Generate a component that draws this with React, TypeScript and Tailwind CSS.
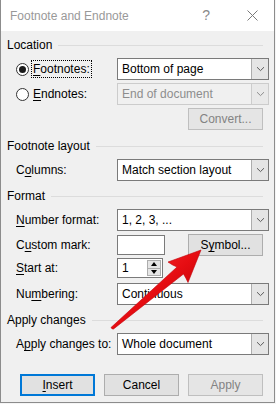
import type { ReactNode } from "react";

function U({ children }: { children: ReactNode }) {
  return <span className="underline underline-offset-[2px] decoration-1">{children}</span>;
}

function Chevron({ color = "#5a5a5a" }: { color?: string }) {
  return (
    <svg width="9" height="6" viewBox="0 0 9 6" fill="none">
      <path d="M1 1.2 L4.5 4.6 L8 1.2" stroke={color} strokeWidth="1" />
    </svg>
  );
}

function Dropdown({ value, disabled }: { value: string; disabled?: boolean }) {
  return (
    <div
      className={`flex h-[22px] w-[152px] shrink-0 border ${
        disabled ? "border-[#cccccc] bg-[#f0f0f0] text-[#8d8d8d]" : "border-[#7a7a7a] bg-white text-black"
      }`}
    >
      <div className="flex flex-1 items-center pl-[4px] leading-none whitespace-nowrap">{value}</div>
      <div
        className={`flex w-[17px] items-center justify-center border-l ${
          disabled ? "border-[#cccccc] bg-[#e9e9e9]" : "border-[#adadad] bg-[#e5e5e5]"
        }`}
      >
        <Chevron color={disabled ? "#8d8d8d" : "#5a5a5a"} />
      </div>
    </div>
  );
}

function Section({ title, className }: { title: string; className: string }) {
  return (
    <div className={`flex h-[14px] items-center ${className}`}>
      <span className="leading-none whitespace-nowrap text-black">{title}</span>
      <div className="ml-[6px] mr-[1px] h-px flex-1 bg-[#dcdcdc]" />
    </div>
  );
}

function Row({ label, children, className = "" }: { label: ReactNode; children: ReactNode; className?: string }) {
  return (
    <div className={`flex h-[22px] items-center ${className}`}>
      <div className="w-[110px] shrink-0 pl-[9px] leading-none whitespace-nowrap text-black">{label}</div>
      {children}
    </div>
  );
}

function Button({
  children,
  disabled,
  primary,
}: {
  children: ReactNode;
  disabled?: boolean;
  primary?: boolean;
}) {
  return (
    <div
      className={`flex h-[22px] w-[75px] items-center justify-center leading-none whitespace-nowrap ${
        primary
          ? "border-2 border-[#0078d7] bg-[#e1e1e1] text-black"
          : disabled
          ? "border border-[#bfbfbf] bg-[#e5e5e5] text-[#838383]"
          : "border border-[#adadad] bg-[#e1e1e1] text-black"
      }`}
    >
      {children}
    </div>
  );
}

function Radio({ checked }: { checked?: boolean }) {
  return (
    <div className="flex h-[13px] w-[13px] shrink-0 items-center justify-center rounded-full border border-[#333333] bg-white">
      {checked && <div className="h-[7px] w-[7px] rounded-full bg-[#1a1a1a]" />}
    </div>
  );
}

function Arrow() {
  return (
    <svg className="pointer-events-none absolute left-0 top-0" width="276" height="404" viewBox="0 0 276 404">
      <defs>
        <linearGradient id="red" x1="0" y1="0" x2="1" y2="1">
          <stop offset="0" stopColor="#ff3b3b" />
          <stop offset="0.5" stopColor="#e60d12" />
          <stop offset="1" stopColor="#a80000" />
        </linearGradient>
      </defs>
      <path
        d="M201 250 L168 262 Q172 265 177 267 L111 327.5 Q112 329.5 113.5 329 L183.5 274 Q186 278 188 282.5 Z"
        fill="url(#red)"
        stroke="#c30008"
        strokeWidth="0.6"
        strokeLinejoin="round"
      />
    </svg>
  );
}

export default function App() {
  return (
    <div className="relative h-[404px] w-[276px] bg-[#f5f5f5] font-['Segoe_UI','Liberation_Sans',sans-serif] text-[12px]">
      <div className="h-[403px] w-[275px] border-b border-l border-r border-[#8c8c8c] bg-[#f0f0f0]">
        {/* title bar */}
        <div className="flex h-[31px] items-center bg-white pl-[9px]">
          <span className="text-[12px] text-[#999999]">Footnote and Endnote</span>
          <span className="ml-auto mr-[37px] text-[14px] text-[#8a8a8a]">?</span>
          <svg className="mr-[16px]" width="11" height="11" viewBox="0 0 11 11">
            <path d="M0.5 0.5 L10.5 10.5 M10.5 0.5 L0.5 10.5" stroke="#7a7a7a" strokeWidth="1" />
          </svg>
        </div>

        <div className="w-[263px] pl-[6px]">
          <Section title="Location" className="mt-[7px]" />

          <div className="mt-[6px] flex h-[22px] items-center pl-[9px]">
            <Radio checked />
            <div className="ml-[2px] w-[86px] shrink-0">
              <span className="inline-flex h-[18px] items-center border border-dotted border-black px-[1px] leading-none">
                <U>F</U>ootnotes:
              </span>
            </div>
            <Dropdown value="Bottom of page" />
          </div>

          <div className="mt-[3px] flex h-[22px] items-center pl-[9px]">
            <Radio />
            <div className="ml-[4px] w-[84px] shrink-0 leading-none">
              <U>E</U>ndnotes:
            </div>
            <Dropdown value="End of document" disabled />
          </div>

          <div className="mt-[3px] flex justify-end pr-[1px]">
            <Button disabled>Convert...</Button>
          </div>

          <Section title="Footnote layout" className="mt-[9px]" />
          <Row label={<>C<U>o</U>lumns:</>} className="mt-[6px]">
            <Dropdown value="Match section layout" />
          </Row>

          <Section title="Format" className="mt-[8px]" />
          <Row label={<><U>N</U>umber format:</>} className="mt-[6px]">
            <Dropdown value="1, 2, 3, ..." />
          </Row>
          <Row label={<>C<U>u</U>stom mark:</>} className="mt-[3px]">
            <div className="h-[20px] w-[48px] border border-[#7a7a7a] bg-white" />
            <div className="ml-auto mr-[1px]">
              <Button>
                S<U>y</U>mbol...
              </Button>
            </div>
          </Row>
          <Row label={<><U>S</U>tart at:</>} className="mt-[1px]">
            <div className="flex h-[20px] w-[46px] border border-[#7a7a7a] bg-white">
              <div className="flex flex-1 items-center pl-[4px] leading-none">1</div>
              <div className="flex w-[15px] flex-col py-[1px] pr-[1px]">
                <div className="flex flex-1 items-center justify-center border border-[#adadad] bg-[#e5e5e5]">
                  <div className="h-0 w-0 border-x-[3.5px] border-b-[4px] border-x-transparent border-b-black" />
                </div>
                <div className="flex flex-1 items-center justify-center border border-t-0 border-[#adadad] bg-[#e5e5e5]">
                  <div className="h-0 w-0 border-x-[3.5px] border-t-[4px] border-x-transparent border-t-black" />
                </div>
              </div>
            </div>
          </Row>
          <Row label={<>Nu<U>m</U>bering:</>} className="mt-[4px]">
            <Dropdown value="Continuous" />
          </Row>

          <Section title="Apply changes" className="mt-[8px]" />
          <Row label={<>A<U>p</U>ply changes to:</>} className="mt-[6px]">
            <Dropdown value="Whole document" />
          </Row>

          <div className="mt-[19px] flex justify-end gap-[9px] pr-[1px]">
            <Button primary>
              <U>I</U>nsert
            </Button>
            <Button>Cancel</Button>
            <Button disabled>Apply</Button>
          </div>
        </div>
      </div>
      <Arrow />
    </div>
  );
}
